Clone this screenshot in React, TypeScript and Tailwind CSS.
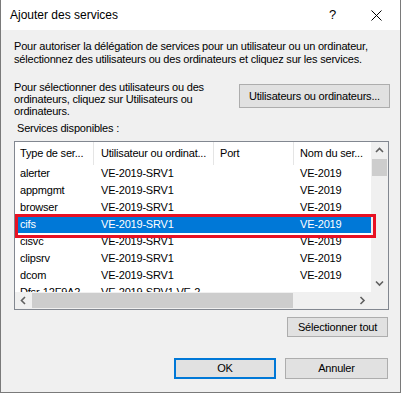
import React from 'react';

const rows = [
  ['alerter', 'VE-2019-SRV1', '', 'VE-2019'],
  ['appmgmt', 'VE-2019-SRV1', '', 'VE-2019'],
  ['browser', 'VE-2019-SRV1', '', 'VE-2019'],
  ['cifs', 'VE-2019-SRV1', '', 'VE-2019'],
  ['cisvc', 'VE-2019-SRV1', '', 'VE-2019'],
  ['clipsrv', 'VE-2019-SRV1', '', 'VE-2019'],
  ['dcom', 'VE-2019-SRV1', '', 'VE-2019'],
  ['Dfsr-12F9A2', 'VE-2019-SRV1.VE-2', '', ''],
];

function Chevron({ dir }: { dir: 'up' | 'down' | 'left' | 'right' }) {
  const pts = {
    up: '1,5 4.5,1.5 8,5',
    down: '1,1.5 4.5,5 8,1.5',
    left: '5,1 1.5,4.5 5,8',
    right: '1.5,1 5,4.5 1.5,8',
  }[dir];
  const horiz = dir === 'left' || dir === 'right';
  return (
    <svg width={horiz ? 7 : 9} height={horiz ? 9 : 7} viewBox={horiz ? '0 0 7 9' : '0 0 9 7'}>
      <polyline points={pts} fill="none" stroke="#606060" strokeWidth="1.6" />
    </svg>
  );
}

function Cells({ r, selected }: { r: string[]; selected?: boolean }) {
  return (
    <div className={`flex h-[17px] items-center whitespace-nowrap ${selected ? 'bg-[#0078d7] text-white' : 'text-black'}`}>
      <div className="w-[79px] shrink-0 overflow-hidden pl-[5px]">{r[0]}</div>
      <div className="w-[120px] shrink-0 overflow-hidden pl-[7px]">{r[1]}</div>
      <div className="w-[80px] shrink-0 overflow-hidden pl-[6px]">{r[2]}</div>
      <div className="w-[100px] shrink-0 overflow-hidden pl-[6px]">{r[3]}</div>
    </div>
  );
}

export default function App() {
  return (
    <div className="w-[402px] h-[394px] bg-white font-['Liberation_Sans',Arial,sans-serif] text-[11px] tracking-[-0.2px] text-black">
      <div className="flex h-[393px] w-[401px] flex-col border-x border-b border-[#7a7a7a]">
        {/* Title bar */}
        <div className="flex h-[30px] shrink-0 items-center bg-white">
          <span className="ml-[9px] text-[12px] tracking-normal">Ajouter des services</span>
          <span className="ml-auto mr-[35px] text-[13px]">?</span>
          <svg className="mr-[18px]" width="11" height="11" viewBox="0 0 11 11">
            <path d="M0.5 0.5 L10.5 10.5 M10.5 0.5 L0.5 10.5" stroke="#000" strokeWidth="1" />
          </svg>
        </div>

        {/* Body */}
        <div className="flex flex-1 flex-col bg-[#f0f0f0] pl-[13px] pr-[10px]">
          <p className="mt-[10px] leading-[13px]">
            Pour autoriser la délégation de services pour un utilisateur ou un ordinateur,
            <br />
            sélectionnez des utilisateurs ou des ordinateurs et cliquez sur les services.
          </p>

          <div className="mt-[15px] flex items-start">
            <p className="w-[205px] leading-[12px]">
              Pour sélectionner des utilisateurs ou des ordinateurs, cliquez sur Utilisateurs ou ordinateurs.
            </p>
            <button className="ml-auto mt-[3px] h-[24px] w-[151px] border border-[#adadad] bg-[#e1e1e1]">
              Utilisateurs ou ordinateurs...
            </button>
          </div>

          <div className="mt-[5px] pl-[3px] leading-[13px]">Services disponibles :</div>

          {/* List */}
          <div className="relative mt-[6px] mr-[1px] flex h-[169px] flex-col border border-[#828790] bg-white">
            <div className="flex flex-1 overflow-hidden">
              <div className="flex-1 overflow-hidden">
                <div className="flex h-[23px] items-center whitespace-nowrap">
                  <div className="h-full w-[79px] shrink-0 border-r border-[#e5e5e5] pl-[5px] leading-[23px]">Type de ser...</div>
                  <div className="h-full w-[120px] shrink-0 border-r border-[#e5e5e5] pl-[7px] leading-[23px]">Utilisateur ou ordinat...</div>
                  <div className="h-full w-[80px] shrink-0 border-r border-[#e5e5e5] pl-[6px] leading-[23px]">Port</div>
                  <div className="h-full w-[100px] shrink-0 pl-[6px] leading-[23px]">Nom du ser...</div>
                </div>
                {rows.map((r, i) => (
                  <Cells key={i} r={r} selected={r[0] === 'cifs'} />
                ))}
              </div>
              {/* vertical scrollbar */}
              <div className="flex w-[17px] shrink-0 flex-col bg-[#f0f0f0]">
                <div className="flex h-[17px] items-center justify-center">
                  <Chevron dir="up" />
                </div>
                <div className="mx-[1px] h-[17px] bg-[#cdcdcd]" />
                <div className="flex-1" />
                <div className="flex h-[17px] items-center justify-center">
                  <Chevron dir="down" />
                </div>
              </div>
            </div>
            {/* horizontal scrollbar */}
            <div className="flex h-[17px] shrink-0">
              <div className="flex flex-1 items-center bg-[#f0f0f0]">
                <div className="flex w-[17px] items-center justify-center">
                  <Chevron dir="left" />
                </div>
                <div className="h-[15px] w-[261px] bg-[#cdcdcd]" />
                <div className="flex-1" />
                <div className="flex w-[17px] items-center justify-center">
                  <Chevron dir="right" />
                </div>
              </div>
              <div className="w-[17px] bg-[#f0f0f0]" />
            </div>

            {/* highlight box */}
            <div className="absolute left-0 top-[72px] h-[24px] w-[361px] border-[3px] border-[#e81123]" />
          </div>

          <div className="mt-[7px] flex justify-end">
            <button className="mr-[2px] h-[20px] w-[101px] border border-[#adadad] bg-[#e1e1e1]">Sélectionner tout</button>
          </div>

          <div className="mt-[21px] flex justify-end gap-[9px]">
            <button className="h-[21px] w-[102px] border-2 border-[#0078d7] bg-[#e1e1e1]">OK</button>
            <button className="mr-[2px] h-[21px] w-[103px] border border-[#adadad] bg-[#e1e1e1]">Annuler</button>
          </div>
        </div>
      </div>
    </div>
  );
}
